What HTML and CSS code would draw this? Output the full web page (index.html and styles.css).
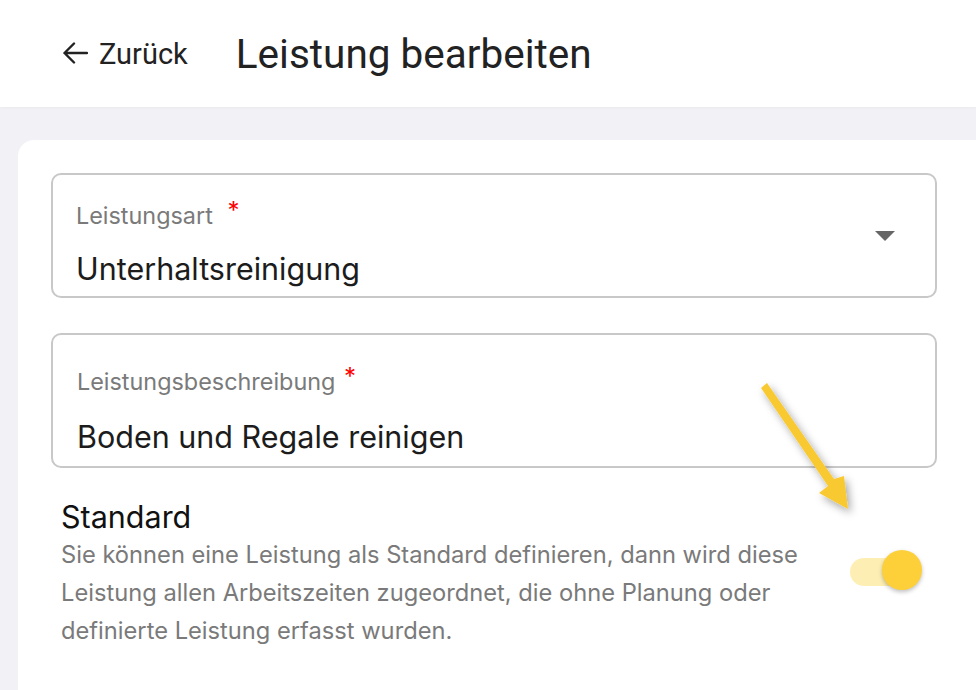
FILE: index.html
```html
<!DOCTYPE html>
<html lang="de">
<head>
    <meta charset="UTF-8">
    <meta name="viewport" content="width=device-width, initial-scale=1.0">
    <title>Leistung bearbeiten</title>
    <link rel="stylesheet" href="styles.css">
</head>
<body>

    <header class="topbar">
        <a class="back" href="#">
            <svg class="back-icon" viewBox="0 0 26 24" width="26" height="24">
                <path d="M25 12H2.5M12 2.5L2.5 12l9.5 9.5" fill="none" stroke="#222" stroke-width="2.4" stroke-linecap="round" stroke-linejoin="round"/>
            </svg>
            Zurück
        </a>
        <h1 class="title">Leistung bearbeiten</h1>
    </header>

    <main class="page">
        <section class="card">
            <!-- Leistungsart (select) -->
            <div class="field field-select">
                <div class="field-body">
                    <label class="field-label">Leistungsart <span class="req">*</span></label>
                    <div class="field-value">Unterhaltsreinigung</div>
                </div>
                <span class="caret"></span>
            </div>

            <!-- Leistungsbeschreibung -->
            <div class="field field-text">
                <div class="field-body">
                    <label class="field-label">Leistungsbeschreibung <span class="req">*</span></label>
                    <div class="field-value">Boden und Regale reinigen</div>
                </div>
            </div>

            <!-- Standard toggle -->
            <div class="setting">
                <div class="setting-text">
                    <h3>Standard</h3>
                    <p>Sie können eine Leistung als Standard definieren, dann wird diese Leistung allen Arbeitszeiten zugeordnet, die ohne Planung oder definierte Leistung erfasst wurden.</p>
                </div>
                <div class="toggle on">
                    <span class="track"></span>
                    <span class="thumb"></span>
                </div>
            </div>
        </section>
    </main>

    <!-- annotation arrow pointing at the toggle -->
    <svg class="hint-arrow" width="976" height="690" viewBox="0 0 976 690">
        <defs>
            <filter id="soft" x="-50%" y="-50%" width="200%" height="200%">
                <feDropShadow dx="3" dy="4" stdDeviation="4" flood-color="#000" flood-opacity="0.35"/>
            </filter>
        </defs>
        <g filter="url(#soft)" fill="#f9c932">
            <path d="M761 388 L767 383 L834 479 L844 476 L848 509 L819 493 L828 486 Z"/>
        </g>
    </svg>

</body>
</html>
```

FILE: styles.css
```css
* {
    margin: 0;
    padding: 0;
    box-sizing: border-box;
}

html, body {
    height: 100%;
    overflow: hidden;
}

body {
    font-family: Inter, "Noto Sans", sans-serif;
    background-color: #f1f1f6;
    color: #222;
}

.topbar {
    height: 107px;
    background: #fff;
    display: flex;
    align-items: center;
    padding-left: 62px;
    box-shadow: 0 1px 3px rgba(0, 0, 0, 0.04);
}

.back {
    display: flex;
    align-items: center;
    gap: 11px;
    color: #222;
    text-decoration: none;
    font-family: Roboto, sans-serif;
    font-size: 29px;
    margin-right: 48px;
}

.back-icon {
    margin-top: -1px;
}

.title {
    font-family: Roboto, sans-serif;
    font-weight: 400;
    font-size: 40.5px;
    color: #222;
    margin-top: 1px;
}

.page {
    padding: 33px 0 0 18px;
}

.card {
    background: #fff;
    border-radius: 16px 0 0 0;
    padding: 33px 39px 60px 33px;
    min-height: 600px;
}

.field {
    border: 2px solid #c8c8c8;
    border-radius: 10px;
    display: flex;
    padding-left: 23px;
}

.field-select {
    height: 125px;
    padding-top: 22px;
    padding-right: 40px;
}

.field-text {
    height: 135px;
    margin-top: 35px;
    padding-top: 28px;
    padding-left: 24px;
}

.field-body {
    flex: 1;
}

.field-label {
    display: block;
    font-size: 23.4px;
    line-height: 28px;
    color: #7a7a7a;
}

.req {
    color: #f00;
    font-size: 24px;
    vertical-align: 5px;
    margin-left: 8px;
}

.field-text .req {
    margin-left: 2px;
}

.field-value {
    font-size: 30.5px;
    line-height: 36px;
    color: #1c1c1c;
    margin-top: 21px;
}

.field-text .field-value {
    margin-top: 23px;
}

.caret {
    width: 0;
    height: 0;
    border-left: 10px solid transparent;
    border-right: 10px solid transparent;
    border-top: 10px solid #666;
    align-self: center;
    margin-top: -22px;
}

.setting {
    display: flex;
    align-items: flex-start;
    padding: 31px 15px 0 10px;
}

.setting-text {
    flex: 1;
}

.setting h3 {
    font-weight: 400;
    font-size: 30.5px;
    line-height: 36px;
    color: #111;
}

.setting p {
    font-size: 23.7px;
    line-height: 38px;
    color: #7a7a7a;
    max-width: 775px;
    margin-top: 1px;
}

.toggle {
    position: relative;
    width: 72px;
    height: 40px;
    margin-left: 16px;
    margin-top: 51px;
}

.toggle .track {
    position: absolute;
    left: 0;
    top: 8px;
    width: 56px;
    height: 28px;
    border-radius: 14px;
    background: #fdefb4;
}

.toggle .thumb {
    position: absolute;
    right: 0;
    top: 0;
    width: 40px;
    height: 40px;
    border-radius: 50%;
    background: #fdd03a;
    box-shadow: 0 2px 4px rgba(0, 0, 0, 0.25);
}

.hint-arrow {
    position: absolute;
    left: 0;
    top: 0;
    pointer-events: none;
}
```
